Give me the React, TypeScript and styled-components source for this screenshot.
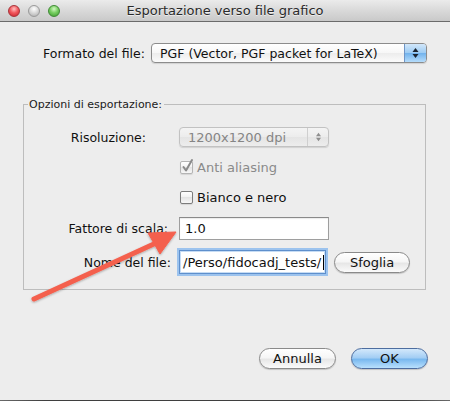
import React from 'react';
import styled, { createGlobalStyle } from 'styled-components';

const GlobalStyle = createGlobalStyle`
  html, body {
    margin: 0;
    padding: 0;
    background: #ececec;
  }
  body {
    font-family: "Lucida Grande", "DejaVu Sans", sans-serif;
  }
`;

// ======= Window chrome =======
const Window = styled.div`
  position: relative;
  width: 450px;
  height: 401px;
  display: flex;
  flex-direction: column;
  background: #ededed;
  overflow: hidden;
  font-size: 12.5px;
  color: #1a1a1a;
`;

const TitleBar = styled.div`
  height: 21px;
  flex-shrink: 0;
  display: flex;
  align-items: center;
  background: linear-gradient(#ebebeb, #d9d9d9 50%, #c9c9c9);
  border-bottom: 1px solid #6b6b6b;
`;

const Lights = styled.div`
  display: flex;
  gap: 8px;
  padding-left: 8px;
`;

const Light = styled.span<{ $tone: 'red' | 'gray' | 'green' }>`
  width: 12px;
  height: 12px;
  border-radius: 50%;
  box-sizing: border-box;
  border: 1px solid
    ${(p) => (p.$tone === 'red' ? '#a8343a' : p.$tone === 'green' ? '#3f8a35' : '#9a9a9a')};
  background: ${(p) =>
    p.$tone === 'red'
      ? 'radial-gradient(circle at 50% 30%, #ffc2c2 0%, #f25a5f 45%, #c81f29 100%)'
      : p.$tone === 'green'
      ? 'radial-gradient(circle at 50% 30%, #d4f7c4 0%, #78cf62 45%, #3b9a2c 100%)'
      : 'radial-gradient(circle at 50% 30%, #ffffff 0%, #dadada 45%, #a9a9a9 100%)'};
`;

const Title = styled.div`
  flex: 1;
  text-align: center;
  margin-right: 60px;
  font-size: 13px;
  color: #2a2a2a;
  text-shadow: 0 1px 0 rgba(255, 255, 255, 0.6);
`;

const Content = styled.div`
  flex: 1;
  display: flex;
  flex-direction: column;
`;

const BottomEdge = styled.div`
  height: 1px;
  background: linear-gradient(90deg, #6a6a6a, #3f3f3f 10%, #3f3f3f 90%, #6a6a6a);
`;

// ======= Controls =======
const FormatRow = styled.div`
  display: flex;
  align-items: center;
  gap: 6px;
  margin-top: 21px;
  padding-left: 43px;
`;

const Label = styled.label<{ $inset?: number }>`
  white-space: nowrap;
  justify-self: end;
  padding-right: ${(p) => p.$inset ?? 0}px;
  color: #111;
`;

const PopUp = styled.div<{ $width: number; $disabled?: boolean }>`
  width: ${(p) => p.$width}px;
  height: 20px;
  box-sizing: border-box;
  display: flex;
  align-items: stretch;
  border: 1px solid ${(p) => (p.$disabled ? '#c2c2c2' : '#8c8c8c')};
  border-radius: 4px;
  overflow: hidden;
  background: ${(p) =>
    p.$disabled
      ? 'linear-gradient(#f4f4f4, #ececec 50%, #e4e4e4 50%, #ededed)'
      : 'linear-gradient(#ffffff, #f7f7f7 50%, #ececec 50%, #fbfbfb)'};
  box-shadow: 0 1px 1px rgba(0, 0, 0, 0.12);
`;

const PopUpText = styled.span<{ $disabled?: boolean }>`
  flex: 1;
  display: flex;
  align-items: center;
  justify-content: flex-start;
  padding-left: ${(p) => (p.$disabled ? 8 : 8)}px;
  color: ${(p) => (p.$disabled ? '#858585' : '#111')};
  white-space: nowrap;
  font-size: ${(p) => (p.$disabled ? 13 : 12.5)}px;
`;

const Stepper = styled.span<{ $disabled?: boolean }>`
  width: ${(p) => (p.$disabled ? 20 : 21)}px;
  display: flex;
  align-items: center;
  justify-content: center;
  border-left: 1px solid ${(p) => (p.$disabled ? '#cfcfcf' : '#6f95c6')};
  background: ${(p) =>
    p.$disabled
      ? 'transparent'
      : 'linear-gradient(#d2e7fa, #9ccbf3 50%, #6fb1ec 50%, #b5dcfb)'};
`;

const Group = styled.fieldset`
  margin: 35px 24px 0 23px;
  padding: 0 0 15px 0;
  border: 1px solid #bdbdbd;
  border-radius: 0;
  min-width: 0;
`;

const Legend = styled.legend`
  margin-left: 4px;
  padding: 0 2px 0 1px;
  font-size: 11px;
  color: #1a1a1a;
`;

const OptionsGrid = styled.div`
  display: grid;
  grid-template-columns: 147px auto;
  grid-template-rows: 20px 20px 20px 23px 24px;
  column-gap: 8px;
  row-gap: 10px;
  align-items: center;
  margin-top: 16px;
`;

const Cell = styled.div`
  grid-column: 2;
  display: flex;
  align-items: center;
  gap: 8px;
`;

const CheckRow = styled.label<{ $disabled?: boolean }>`
  grid-column: 2;
  display: flex;
  align-items: center;
  gap: 4px;
  padding-left: 1px;
  color: ${(p) => (p.$disabled ? '#8a8a8a' : '#111')};
  font-size: 13px;
`;

const Box = styled.span<{ $disabled?: boolean }>`
  position: relative;
  width: 13px;
  height: 13px;
  box-sizing: border-box;
  border: 1px solid ${(p) => (p.$disabled ? '#b4b4b4' : '#7c7c7c')};
  border-radius: 2px;
  background: linear-gradient(#ffffff, #f1f1f1 50%, #e4e4e4 50%, #f7f7f7);
  box-shadow: 0 1px 1px rgba(0, 0, 0, 0.1);
`;

const Check = styled.svg`
  position: absolute;
  left: 0px;
  top: -4px;
`;

const TextField = styled.div<{ $width: number; $focus?: boolean }>`
  width: ${(p) => p.$width}px;
  height: ${(p) => (p.$focus ? 24 : 23)}px;
  box-sizing: border-box;
  display: flex;
  align-items: center;
  padding-left: ${(p) => (p.$focus ? 3 : 5)}px;
  background: #fff;
  border: 1px solid ${(p) => (p.$focus ? '#5e8fcc' : '#9e9e9e')};
  border-top-color: ${(p) => (p.$focus ? '#5e8fcc' : '#8a8a8a')};
  box-shadow: ${(p) =>
    p.$focus ? '0 0 0 2px #9cc3ee, inset 0 0 0 1px #c6dcf4' : 'inset 0 1px 1px rgba(0,0,0,0.08)'};
  font-size: 13px;
  color: #111;
  white-space: nowrap;
  overflow: hidden;
`;

const Caret = styled.span`
  display: inline-block;
  width: 1px;
  height: 15px;
  margin-left: 2px;
  background: #000;
`;

const PushButton = styled.button<{ $default?: boolean; $width: number }>`
  width: ${(p) => p.$width}px;
  height: 21px;
  padding: 0;
  border-radius: 11px;
  font-family: inherit;
  font-size: 13px;
  color: #111;
  border: 1px solid ${(p) => (p.$default ? '#4d6d9f' : '#8a8a8a')};
  background: ${(p) =>
    p.$default
      ? 'linear-gradient(#d3e8fb, #a4cef4 45%, #7ab9ef 55%, #b9e0fd)'
      : 'linear-gradient(#ffffff, #f6f6f6 45%, #e7e7e7 55%, #fbfbfb)'};
  box-shadow: 0 1px 1px rgba(0, 0, 0, 0.18);
`;

const Footer = styled.div`
  display: flex;
  justify-content: flex-end;
  gap: 15px;
  margin-top: 58px;
  padding-right: 22px;
`;

const Overlay = styled.svg`
  position: absolute;
  left: 0;
  top: 0;
  pointer-events: none;
`;

const Arrows: React.FC<{ color: string; small?: boolean }> = ({ color, small }) => (
  <svg width="7" height={small ? 10 : 12} viewBox="0 0 7 12">
    <path d="M3.5 1 L6.5 5 L0.5 5 Z" fill={color} />
    <path d="M3.5 11 L6.5 7 L0.5 7 Z" fill={color} />
  </svg>
);

const App: React.FC = () => {
  return (
    <>
      <GlobalStyle />
      <Window>
        <TitleBar>
          <Lights>
            <Light $tone="red" />
            <Light $tone="gray" />
            <Light $tone="green" />
          </Lights>
          <Title>Esportazione verso file grafico</Title>
        </TitleBar>

        <Content>
          <FormatRow>
            <Label>Formato del file:</Label>
            <PopUp $width={276}>
              <PopUpText>PGF (Vector, PGF packet for LaTeX)</PopUpText>
              <Stepper>
                <Arrows color="#1b2430" />
              </Stepper>
            </PopUp>
          </FormatRow>

          <Group>
            <Legend>Opzioni di esportazione:</Legend>
            <OptionsGrid>
              <Label $inset={25}>Risoluzione:</Label>
              <Cell>
                <PopUp $width={150} $disabled>
                  <PopUpText $disabled>1200x1200 dpi</PopUpText>
                  <Stepper $disabled>
                    <Arrows color="#8e8e8e" small />
                  </Stepper>
                </PopUp>
              </Cell>

              <CheckRow $disabled>
                <Box $disabled>
                  <Check width="14" height="15" viewBox="0 0 14 15">
                    <path
                      d="M2.5 9 L5 12.5 L11 2"
                      fill="none"
                      stroke="#8a8a8a"
                      strokeWidth="2"
                      strokeLinecap="round"
                      strokeLinejoin="round"
                    />
                  </Check>
                </Box>
                Anti aliasing
              </CheckRow>

              <CheckRow>
                <Box />
                Bianco e nero
              </CheckRow>

              <Label $inset={3}>Fattore di scala:</Label>
              <Cell>
                <TextField $width={150}>1.0</TextField>
              </Cell>

              <Label>Nome del file:</Label>
              <Cell>
                <TextField $width={147} $focus>
                  /Perso/fidocadj_tests/
                  <Caret />
                </TextField>
                <PushButton $width={76}>Sfoglia</PushButton>
              </Cell>
            </OptionsGrid>
          </Group>

          <Footer>
            <PushButton $width={77}>Annulla</PushButton>
            <PushButton $width={77} $default>
              OK
            </PushButton>
          </Footer>
        </Content>

        <BottomEdge />

        <Overlay width="450" height="401" viewBox="0 0 450 401">
          <defs>
            <filter id="shade" x="-10%" y="-10%" width="120%" height="130%">
              <feDropShadow dx="0" dy="1" stdDeviation="1" floodColor="#000" floodOpacity="0.3" />
            </filter>
          </defs>
          <g filter="url(#shade)" fill="#f4604e" stroke="#f4604e">
            <line x1="34" y1="299" x2="156" y2="243" strokeWidth="5" strokeLinecap="round" />
            <polygon points="176,232 148,233 160,254" strokeWidth="1" strokeLinejoin="round" />
          </g>
        </Overlay>
      </Window>
    </>
  );
};

export default App;
